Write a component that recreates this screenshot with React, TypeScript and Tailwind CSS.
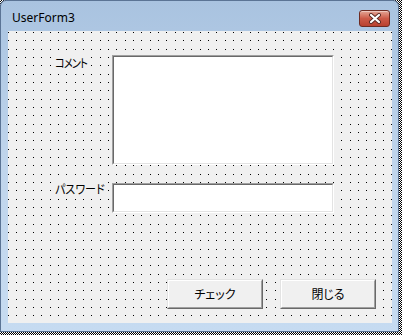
import React from "react";

const jp = { fontFamily: '"Noto Sans CJK JP", "Noto Sans", sans-serif', fontFeatureSettings: '"palt"' };

function DotGrid() {
  const pts = [0, 8, 17];
  return (
    <svg className="absolute inset-0 pointer-events-none" width="384" height="292" shapeRendering="crispEdges">
      <defs>
        <pattern id="dots" width="25" height="25" patternUnits="userSpaceOnUse" x="0" y="1">
          {pts.flatMap((x) => pts.map((y) => <rect key={x + "-" + y} x={x} y={y} width="1" height="1" fill="#000" />))}
        </pattern>
      </defs>
      <rect width="384" height="292" fill="url(#dots)" />
    </svg>
  );
}

function TextBox({ w, h }: { w: number; h: number }) {
  return (
    <div
      className="border border-t-[#a0a0a0] border-l-[#a0a0a0] border-b-white border-r-white"
      style={{ width: w, height: h }}
    >
      <div className="w-full h-full border border-t-[#696969] border-l-[#696969] border-b-[#e3e3e3] border-r-[#e3e3e3] bg-white" />
    </div>
  );
}

function Button({ label }: { label: string }) {
  return (
    <div className="w-[96px] h-[30px] border border-t-[#e3e3e3] border-l-[#e3e3e3] border-b-[#696969] border-r-[#696969]">
      <div
        className="w-full h-full border border-t-white border-l-white border-b-[#a0a0a0] border-r-[#a0a0a0] bg-[#f0f0f0] flex items-center justify-center text-[12px] text-black"
        style={jp}
      >
        {label}
      </div>
    </div>
  );
}

export default function App() {
  return (
    <div className="w-[402px] h-[335px] bg-[conic-gradient(#000_25%,#fff_0_50%,#000_0_75%,#fff_0)] bg-[length:2px_2px] overflow-hidden">
      <div className="w-[399px] h-[332px] border border-[#5b7495] rounded-t-[6px] bg-gradient-to-b from-[#a9c3e0] via-[#c0d5ec] to-[#c6dbf1] flex flex-col overflow-hidden">
        {/* title bar */}
        <div className="h-[30px] flex items-start justify-between pl-[11px] pr-[8px] shrink-0">
          <span
            className="mt-[9px] text-[12px] leading-[16px] text-black"
            style={{ fontFamily: '"Noto Sans", "Open Sans", sans-serif' }}
          >
            UserForm3
          </span>
          <div className="mt-[9px] w-[31px] h-[17px] rounded-[3px] border border-[#6e2b22] bg-gradient-to-b from-[#e3a596] via-[#cc5a48] to-[#b9412f] flex items-center justify-center shadow-[inset_0_1px_0_rgba(255,255,255,0.4)]">
            <svg width="14" height="11" viewBox="0 0 14 11">
              <path d="M3 2 L11 9 M11 2 L3 9" stroke="#5a2a24" strokeWidth="4" strokeLinecap="round" />
              <path d="M3 2 L11 9 M11 2 L3 9" stroke="#ffffff" strokeWidth="2.2" strokeLinecap="round" />
            </svg>
          </div>
        </div>
        {/* client area */}
        <div className="ml-[7px] w-[384px] h-[292px] bg-[#f0f0f0] relative shrink-0">
          <DotGrid />
          <div className="relative flex flex-col pt-[24px] pl-[47px]">
            <div className="flex items-start">
              <div className="w-[57px] flex items-start">
                <div
                  className="bg-[#f0f0f0] text-[12px] leading-[14px] mt-[1px] text-black tracking-[-1px] scale-x-[0.85] origin-left whitespace-nowrap"
                  style={jp}
                >
                  コメント
                </div>
              </div>
              <TextBox w={222} h={110} />
            </div>
            <div className="flex items-start mt-[18px]">
              <div className="w-[57px] flex items-start">
                <div
                  className="bg-[#f0f0f0] text-[12px] leading-[14px] mt-[-1px] text-black scale-x-[0.92] origin-left whitespace-nowrap"
                  style={jp}
                >
                  パスワード
                </div>
              </div>
              <TextBox w={222} h={30} />
            </div>
            <div className="flex mt-[66px] pl-[112px] gap-[17px]">
              <Button label="チェック" />
              <Button label="閉じる" />
            </div>
          </div>
        </div>
      </div>
    </div>
  );
}
